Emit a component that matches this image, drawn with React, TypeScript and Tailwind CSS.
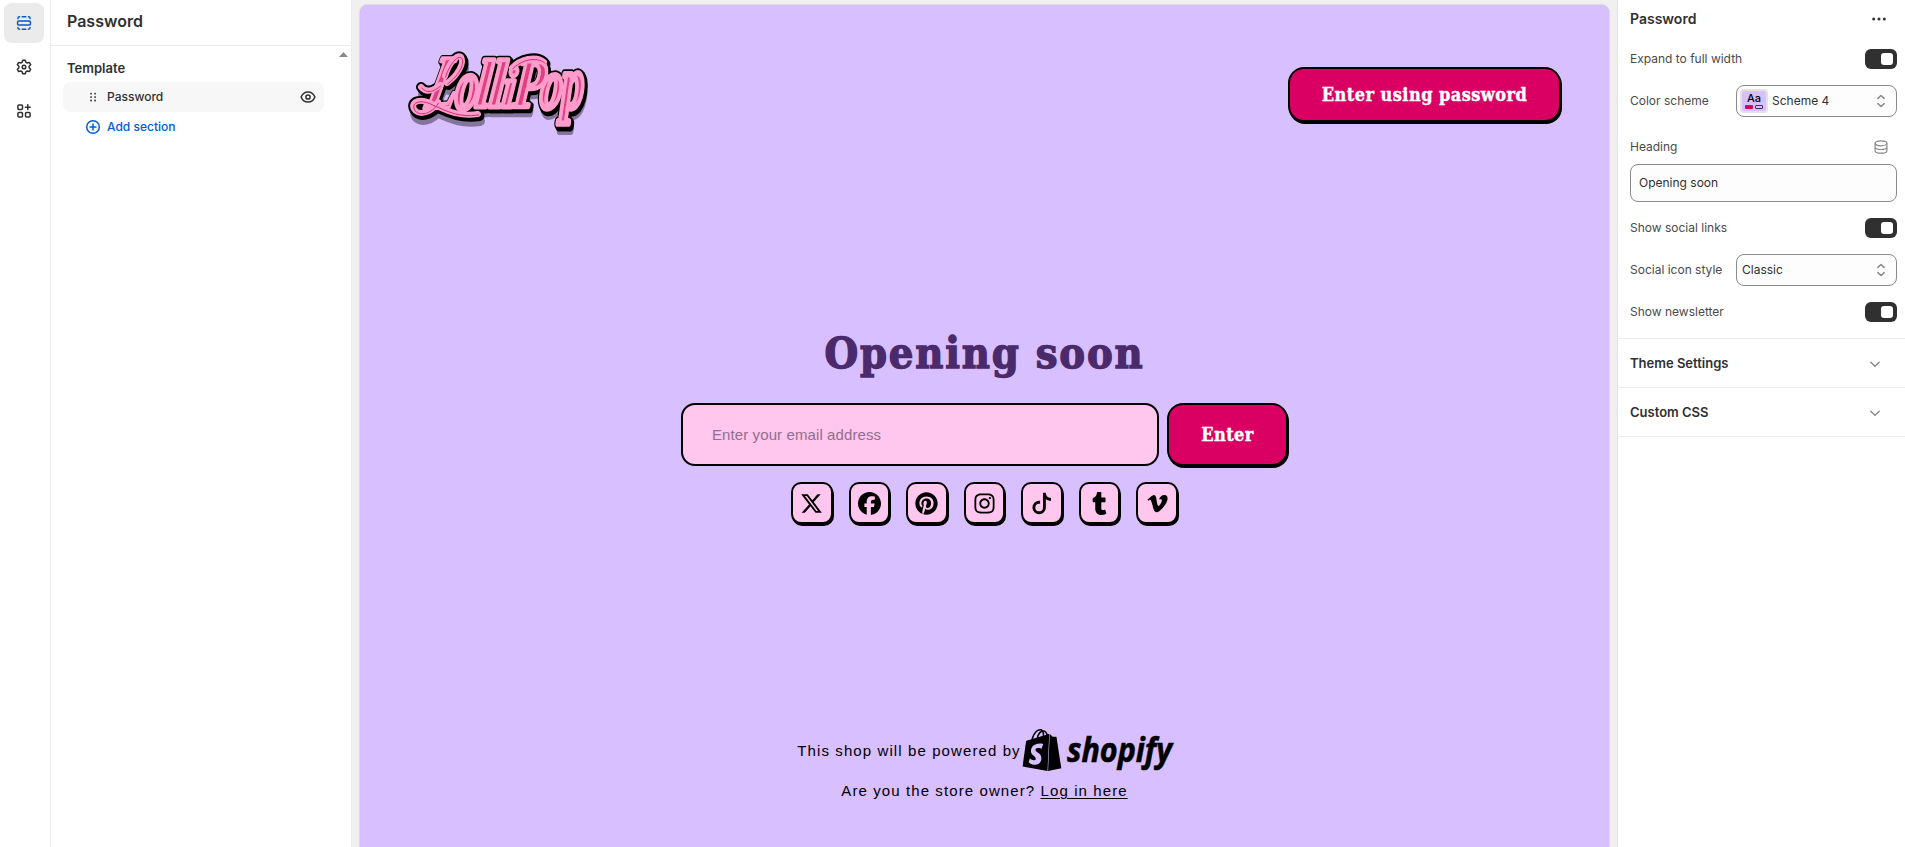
import type { ReactNode } from "react";
import { FaXTwitter, FaFacebook, FaPinterest, FaInstagram, FaTumblr, FaVimeoV } from "react-icons/fa6";
import { SiShopify } from "react-icons/si";

const SERIF = "font-['DejaVu_Serif_Condensed','DejaVu_Serif',serif] [font-stretch:condensed]";

function SectionsIcon() {
  return (
    <svg className="size-4" viewBox="0 0 16 16" fill="none" stroke="currentColor" strokeWidth="1.5" strokeLinecap="round">
      <rect x="1.6" y="6.1" width="12.8" height="3.8" rx="1" />
      <path d="M1.9 3.6v-.2A1.7 1.7 0 0 1 3.6 1.7M6.2 1.7h3.6M12.4 1.7a1.7 1.7 0 0 1 1.7 1.7v.2M1.9 12.4v.2a1.7 1.7 0 0 0 1.7 1.7M6.2 14.3h3.6M12.4 14.3a1.7 1.7 0 0 0 1.7-1.7v-.2" />
    </svg>
  );
}

function GearIcon() {
  return (
    <svg className="size-4" viewBox="0 0 16 16" fill="none" stroke="currentColor" strokeWidth="1.5" strokeLinejoin="round">
      <path d="M6.7 1.2h2.6l.5 2 1.5.8 2-.6 1.3 2.3-1.5 1.5v1.6l1.5 1.5-1.3 2.3-2-.6-1.5.8-.5 2H6.7l-.5-2-1.5-.8-2 .6-1.3-2.3 1.5-1.5V7.2L1.4 5.700l1.300-2.300 2 .6 1.500-.8z" />
      <circle cx="8" cy="8" r="1.800" />
    </svg>
  );
}

function AppsIcon() {
  return (
    <svg className="size-4" viewBox="0 0 16 16" fill="none" stroke="currentColor" strokeWidth="1.5" strokeLinecap="round">
      <rect x="1.900" y="1.900" width="4.600" height="4.600" rx="1" />
      <rect x="1.900" y="9.500" width="4.600" height="4.600" rx="1" />
      <rect x="9.500" y="9.500" width="4.600" height="4.600" rx="1" />
      <path d="M11.800 1.800v4.800M9.400 4.200h4.800" />
    </svg>
  );
}

function DragIcon() {
  return (
    <svg className="h-4 w-4" viewBox="0 0 16 16" fill="#4a4a4a">
      {[5.2, 9.2].map((x) =>
        [3.8, 7.2, 10.6].map((y) => <rect key={`${x}-${y}`} x={x} y={y} width="1.800" height="1.800" rx=".4" />)
      )}
    </svg>
  );
}

function EyeIcon() {
  return (
    <svg className="size-4" viewBox="0 0 16 16" fill="none" stroke="#303030" strokeWidth="1.500">
      <path d="M1.100 8C2.300 5 5 2.900 8 2.900s5.700 2.100 6.900 5.100C13.700 11 11 13.100 8 13.100S2.300 11 1.100 8z" strokeLinejoin="round" />
      <circle cx="8" cy="8" r="2.100" />
    </svg>
  );
}

function PlusCircle() {
  return (
    <svg className="size-4" viewBox="0 0 16 16" fill="none" stroke="currentColor" strokeWidth="1.500" strokeLinecap="round">
      <circle cx="8" cy="8" r="6.300" />
      <path d="M8 5v6M5 8h6" />
    </svg>
  );
}

function UpDown() {
  return (
    <svg className="size-4" viewBox="0 0 16 16" fill="none" stroke="#8a8a8a" strokeWidth="1.500" strokeLinecap="round" strokeLinejoin="round">
      <path d="M4.900 5.400 8 2.500l3.100 2.900M4.900 10.600 8 13.500l3.100-2.900" />
    </svg>
  );
}

function TiktokIcon({ className }: { className?: string }) {
  return (
    <svg className={className} viewBox="0 0 24 24" fill="none" stroke="currentColor" strokeWidth="3">
      <path d="M14 .8v15.400a5.500 5.500 0 1 1-5.500-5.500h1M14 1.500c.4 3.700 3 6.100 6.800 6.300" />
    </svg>
  );
}

function LolliPopLogo() {
  return (
    <svg className="-ml-[18px] h-[110px] w-[220px]" viewBox="0 0 220 110" strokeLinejoin="round" strokeLinecap="round" role="img" aria-label="LolliPop">
      <defs>
        <g id="word" fontFamily="Liberation Serif" fontWeight="700" fontStyle="italic">
          <text transform="translate(34 73) skewX(-14) scale(.6 .95)" fontSize="80">L</text>
          <text transform="translate(64 74) skewX(-6) scale(.86 1.36)" fontSize="52">o</text>
          <text transform="translate(84 72) skewX(-6) scale(.9 1.1)" fontSize="62">l</text>
          <text transform="translate(98 72) skewX(-6) scale(.9 1.1)" fontSize="62">l</text>
          <text transform="translate(111 72) skewX(-6) scale(.9 1.1)" fontSize="52">i</text>
          <text transform="translate(122 72) skewX(-6) scale(.76 1.06)" fontSize="66">P</text>
          <text transform="translate(149 73) skewX(-6) scale(.86 1.4)" fontSize="50">o</text>
          <text transform="translate(171 73) skewX(-2) scale(.86 1.42)" fontSize="52">p</text>
        </g>
        <g id="swash" fill="none">
          <path d="M31 52C36 58 43 56 50 50" />
          <path d="M55 41C59 28 67 19 71 22C75 28 67 41 57 48" />
          <path d="M48 67C40 80 27 80 24 74C20 66 31 63 42 69C56 75 68 82 88 79" />
          <path d="M122 33C130 24 146 20 154 27" />
        </g>
      </defs>
      <g transform="translate(2 7)" opacity=".38" stroke="#000">
        <use href="#word" strokeWidth="6" />
        <use href="#swash" strokeWidth="10" />
      </g>
      <g transform="translate(1.500 2)" stroke="#000">
        <use href="#word" strokeWidth="8" />
        <use href="#swash" strokeWidth="10" />
      </g>
      <g stroke="#000">
        <use href="#word" strokeWidth="7" />
        <use href="#swash" strokeWidth="10" />
      </g>
      <use href="#word" fill="#e0407f" stroke="#ff9ccb" strokeWidth="4.400" />
      <use href="#swash" stroke="#ff9ccb" strokeWidth="6" />
      <use href="#swash" stroke="#d62a77" strokeWidth="1" transform="translate(.6 1)" />
    </svg>
  );
}

function ShopifyLogo() {
  return (
    <span className="-ml-px flex items-center text-black">
      <SiShopify className="h-[42px] w-[44px]" preserveAspectRatio="none" />
      <svg className="h-[44px] w-[108px] overflow-visible" viewBox="0 0 108 44">
        <text x="3" y="34" fontFamily="Open Sans" fontStyle="italic" fontWeight="700" fontSize="34" letterSpacing="0" textLength="105" lengthAdjust="spacingAndGlyphs" stroke="#000" strokeWidth=".6">
          shopify
        </text>
      </svg>
    </span>
  );
}

function RailButton({ active, children }: { active?: boolean; children: ReactNode }) {
  return (
    <button className={`flex size-10 items-center justify-center rounded-lg ${active ? "bg-[#ebebeb] text-[#005bd3]" : "text-[#303030]"}`}>
      {children}
    </button>
  );
}

function Toggle() {
  return (
    <span className="flex h-5 w-8 items-center justify-end rounded-md bg-[#303030] pr-1">
      <span className="size-3 rounded-[3px] bg-white" />
    </span>
  );
}

function Field({ label, children }: { label: string; children: ReactNode }) {
  return (
    <div className="flex h-[42px] items-center justify-between">
      <span className="text-[#4a4a4a]">{label}</span>
      {children}
    </div>
  );
}

function Accordion({ title }: { title: string }) {
  return (
    <div className="flex h-[49px] items-center justify-between border-b border-[#ebebeb] pt-px pr-[22px] pl-3 text-[13px] font-semibold">
      {title}
      <svg className="size-4" viewBox="0 0 16 16" fill="none" stroke="#8a8a8a" strokeWidth="1.500" strokeLinecap="round" strokeLinejoin="round">
        <path d="m3.800 6.200 4.200 4 4.200-4" />
      </svg>
    </div>
  );
}

const socials = [FaXTwitter, FaFacebook, FaPinterest, FaInstagram, TiktokIcon, FaTumblr, FaVimeoV];

export default function App() {
  return (
    <div className="flex h-[847px] w-[1905px] overflow-hidden bg-[#f0f0f0] font-['Inter',sans-serif] text-xs text-[#303030]">
      <nav className="flex w-[51px] shrink-0 flex-col gap-1 border-r border-[#ebebeb] bg-white pt-[3px] pl-1">
        <RailButton active><SectionsIcon /></RailButton>
        <RailButton><GearIcon /></RailButton>
        <RailButton><AppsIcon /></RailButton>
      </nav>

      <aside className="w-[301px] shrink-0 border-r border-[#ebebeb] bg-white">
        <h1 className="flex h-[46px] items-center border-b border-[#ebebeb] pb-1 pl-4 text-base font-semibold">Password</h1>
        <div className="flex justify-between pr-[3px]">
          <div className="w-[273px] pt-3 pl-3">
            <h2 className="pl-1 text-[13px] leading-5 font-semibold">Template</h2>
            <div className="mt-1 flex h-[30px] items-center rounded-lg bg-[#f7f7f7] pr-2 pl-[22px] font-[450]">
              <DragIcon />
              <span className="ml-1.5 flex-1">Password</span>
              <EyeIcon />
            </div>
            <div className="flex h-[30px] items-center gap-1.5 pl-[22px] font-[450] text-[#005bd3]">
              <PlusCircle />
              Add section
            </div>
          </div>
          <svg className="mt-1.5 h-[5px] w-[9px]" viewBox="0 0 9 5"><path d="M0 5 4.500 0 9 5z" fill="#8a8a8a" /></svg>
        </div>
      </aside>

      <main className="flex-1 pt-[5px] pr-2 pl-2">
        <div className="flex h-[850px] flex-col items-center rounded-t-lg bg-[#d8bfff] font-['Liberation_Sans',sans-serif] text-black shadow-[0_0_2px_rgba(0,0,0,0.3)]">
          <header className="flex w-full items-start justify-between pt-[30px] pr-12 pl-12">
            <LolliPopLogo />
            <button className={`${SERIF} mt-8 h-[55px] w-[273px] rounded-2xl border-2 border-black bg-[#da0063] text-[18px] font-bold tracking-[0.450px] text-white shadow-[1px_2px_0_#000] [-webkit-text-stroke:0.400px_#fff]`}>
              Enter using password
            </button>
          </header>

          <h2 className={`${SERIF} mt-[176px] h-[64px] text-[43px] leading-[64px] font-bold tracking-[1.800px] text-[#4a2a6b] [-webkit-text-stroke:1.300px_#4a2a6b]`}>
            Opening soon
          </h2>

          <form className="mt-[18px] flex gap-2">
            <div className="flex h-[63px] w-[478px] items-center rounded-[14px] border-2 border-black bg-[#ffc6ee] pt-px pl-[29px] text-[15px] tracking-[0.1px] text-[#8f6f90]">
              Enter your email address
            </div>
            <button type="button" className={`${SERIF} h-[63px] w-[121px] rounded-2xl border-2 border-black bg-[#da0063] text-[18px] font-bold tracking-[0.450px] text-white shadow-[1px_2px_0_#000] [-webkit-text-stroke:0.400px_#fff]`}>
              Enter
            </button>
          </form>

          <div className="mt-4 flex gap-4">
            {socials.map((Icon, i) => (
              <span key={i} className="flex h-[42px] w-[41.600px] items-center justify-center rounded-[10px] border-2 border-black bg-[#ffc6ee] shadow-[1px_2px_0_#000]">
                <Icon className="size-[23px]" />
              </span>
            ))}
          </div>

          <footer className="mt-[204px] flex flex-col items-center text-[15px] tracking-[1.100px]">
            <div className="flex h-11 items-center">
              <span className="pt-0.5">This shop will be powered by</span>
              <ShopifyLogo />
            </div>
            <p className="mt-[9px]">
              Are you the store owner? <a className="underline underline-offset-2">Log in here</a>
            </p>
          </footer>
        </div>
      </main>

      <aside className="w-[288px] shrink-0 border-l border-[#e3e3e3] bg-white">
        <div className="pr-2 pl-3">
          <div className="flex h-[38px] items-center justify-between pr-2.5 text-sm font-semibold">
            Password
            <svg className="size-4" viewBox="0 0 16 16" fill="#303030">
              <circle cx="2.700" cy="8" r="1.500" /><circle cx="8" cy="8" r="1.500" /><circle cx="13.300" cy="8" r="1.500" />
            </svg>
          </div>
          <Field label="Expand to full width"><Toggle /></Field>
          <Field label="Color scheme">
            <span className="flex h-8 w-[161px] items-center rounded-lg border border-[#8a8a8a] bg-[#fdfdfd] pr-[7px] pl-[3px]">
              <span className="flex h-6 w-7 flex-col items-center rounded border-2 border-[#e3e3e3] bg-[#d8bfff]">
                <span className="text-[11px] leading-[14px] font-medium text-black">Aa</span>
                <span className="flex gap-0.5">
                  <span className="h-1 w-2 rounded-[1px] bg-[#da0063]" />
                  <span className="h-1 w-2 rounded-[1px] border border-[#4a2a6b]" />
                </span>
              </span>
              <span className="ml-1 flex-1">Scheme 4</span>
              <UpDown />
            </span>
          </Field>
          <div className="mt-[14px] flex h-[22px] items-center justify-between pr-2 text-[#4a4a4a]">
            Heading
            <svg className="size-4" viewBox="0 0 16 16" fill="none" stroke="#8a8a8a" strokeWidth="1.200">
              <ellipse cx="8" cy="4.300" rx="5.900" ry="2.500" />
              <path d="M2.100 4.300v7.400c0 1.400 2.600 2.500 5.900 2.500s5.900-1.100 5.900-2.500V4.300M2.100 8c0 1.400 2.600 2.500 5.900 2.500s5.900-1.100 5.900-2.500" />
            </svg>
          </div>
          <div className="mt-1.5 flex h-[38px] items-center rounded-lg border border-[#8a8a8a] bg-[#fdfdfd] pl-2">Opening soon</div>
          <div className="mt-[5px]">
            <Field label="Show social links"><Toggle /></Field>
            <Field label="Social icon style">
              <span className="flex h-8 w-[161px] items-center justify-between rounded-lg border border-[#8a8a8a] bg-[#fdfdfd] pr-[7px] pl-[5px]">
                Classic
                <UpDown />
              </span>
            </Field>
            <Field label="Show newsletter"><Toggle /></Field>
          </div>
        </div>
        <div className="mt-[5px] border-t border-[#ebebeb]">
          <Accordion title="Theme Settings" />
          <Accordion title="Custom CSS" />
        </div>
      </aside>
    </div>
  );
}
